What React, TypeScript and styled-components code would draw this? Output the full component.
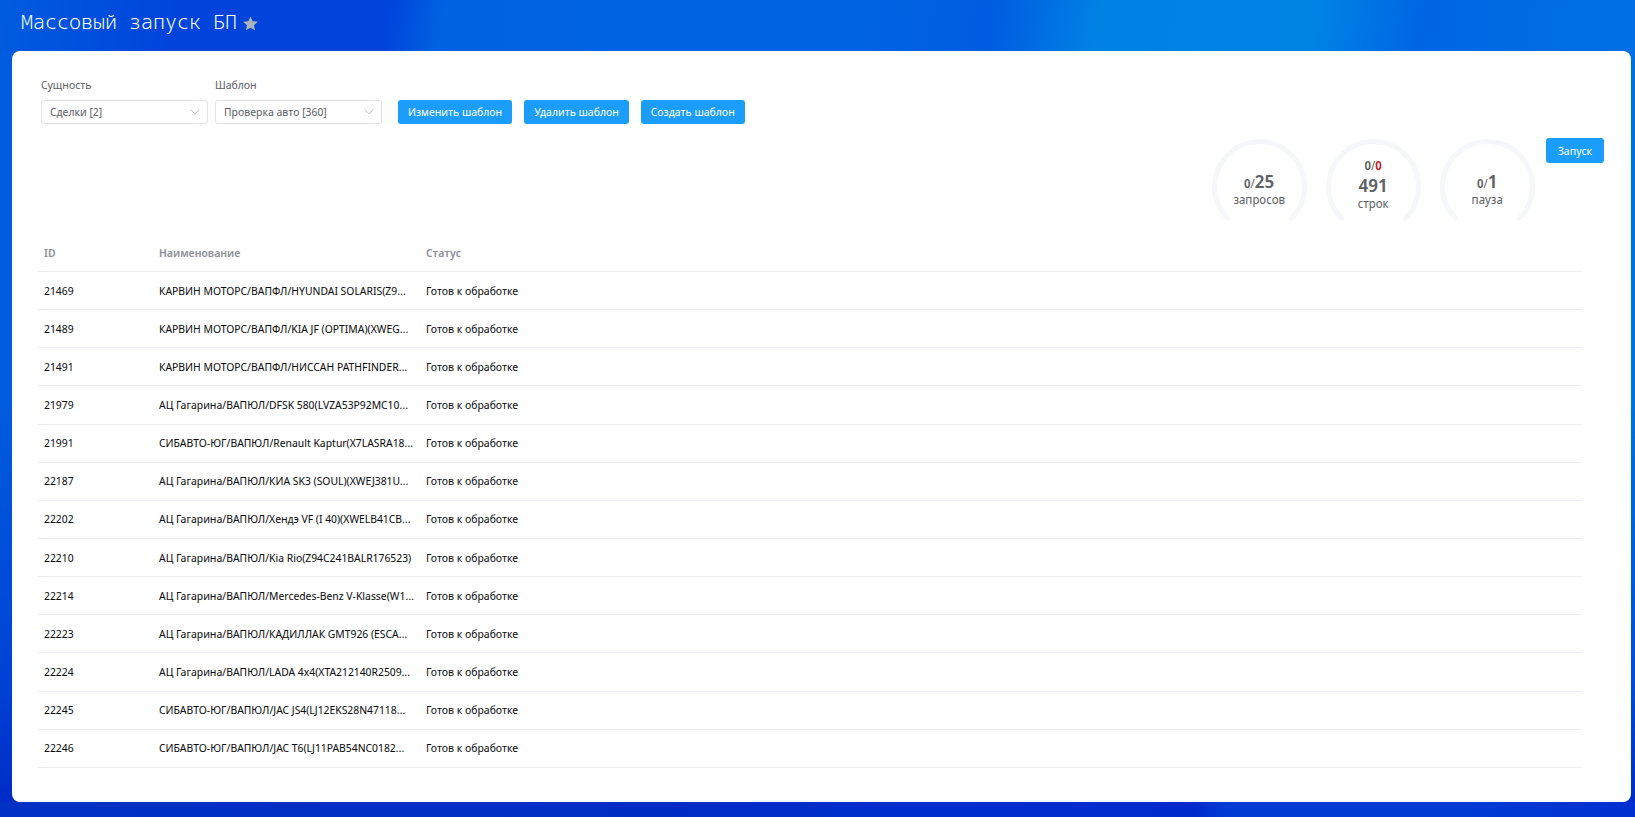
import React from 'react';
import styled, { createGlobalStyle } from 'styled-components';

const Global = createGlobalStyle`
  * { box-sizing: border-box; }
  body {
    margin: 0;
    font-family: "Noto Sans Display", "Noto Sans", sans-serif;
    font-size: 11px;
    color: #0d0e10;
    background: #0050dc;
  }
`;

const Page = styled.div`
  min-height: 100vh;
  display: flex;
  flex-direction: column;
  padding: 0 4px 15px 12px;
  background:
    linear-gradient(to right, #0030c4 0, #002cc4 40%, #002ece 55%, #002acc 73%, #003ad4 75%, #003ad4 90%, #0030d0 100%) bottom / 100% 15px no-repeat,
    linear-gradient(to bottom, transparent 400px, rgba(0, 40, 205, 0.5) 680px, #002cc8 800px),
    linear-gradient(to right, #005cde 12px, transparent 12px) 0 51px no-repeat,
    linear-gradient(100deg, #005cde 0, #0044dc 10%, #0044dc 22%, #0062e0 25%, #0064e2 48%, #005ce0 56%, #0082e4 62%, #0084e4 74%, #0066e4 80%, #0074e6 100%);
`;

const Header = styled.header`
  display: flex;
  align-items: center;
  gap: 6px;
  height: 51px;
  padding: 0 8px 8px 9px;
`;

const Title = styled.h1`
  margin: 0;
  color: #fff;
  font: 300 20px/24px "Noto Sans Mono", "Liberation Mono", monospace;
`;

const StarButton = styled.button`
  display: flex;
  padding: 4px 0 0;
  border: 0;
  background: none;
  color: #a9b4bf;
`;

const Panel = styled.main`
  flex: 1;
  display: flex;
  flex-direction: column;
  padding: 26px 27px 34px 26px;
  border-radius: 8px;
  background: #fff;
`;

const Toolbar = styled.div`
  display: flex;
  align-items: flex-end;
  gap: 12px;
  padding-left: 3px;
`;

const Fields = styled.div`
  display: flex;
  gap: 7px;
  margin-right: 4px;
`;

const Field = styled.label`
  display: flex;
  flex-direction: column;
  gap: 7px;
  width: 167px;
  line-height: 16px;
  color: #606266;
`;

const SelectBox = styled.span`
  display: grid;
  align-items: center;
  > * { grid-area: 1 / 1; }
  > svg { justify-self: end; margin-right: 8px; pointer-events: none; }
`;

const Select = styled.select`
  appearance: none;
  width: 100%;
  height: 24px;
  padding: 0 24px 0 8px;
  border: 1px solid #e0e2e8;
  border-radius: 3px;
  background: #fff;
  font: inherit;
  color: #606266;
`;

const Button = styled.button<{ $large?: boolean }>`
  height: ${(p) => (p.$large ? 25 : 24)}px;
  padding: 0 ${(p) => (p.$large ? 12 : 10)}px 1px;
  border: 0;
  border-radius: 3px;
  background: #1b9dfd;
  color: #fff;
  font: inherit;
  white-space: nowrap;
`;

const Stats = styled.section`
  display: flex;
  justify-content: flex-end;
  align-items: flex-start;
  gap: 19px;
  margin-top: 14px;
  button { margin-left: -8px; }
`;

const GaugeBox = styled.div`
  display: grid;
  place-items: center;
  width: 95px;
  height: 97px;
  > * { grid-area: 1 / 1; }
`;

const GaugeText = styled.div<{ $lines: number }>`
  display: flex;
  flex-direction: column;
  align-items: center;
  padding: ${(p) => (p.$lines === 2 ? '8px 0 0' : '0 0 4px')};
  color: #606266;
  font-size: 12px;
  line-height: 16px;
`;

const Count = styled.div`
  font-weight: 600;
  line-height: 16px;
`;

const Total = styled.strong`
  font-size: 18px;
  font-weight: 600;
  line-height: 16px;

  ${GaugeText} > & { line-height: 22px; }
`;

const Slash = styled.span`
  font-weight: 400;
`;

const Failed = styled.strong`
  font-weight: 600;
  color: #c9151e;
`;

const TableArea = styled.div`
  flex: 1;
  display: grid;
  padding-right: 22px;
`;

const Table = styled.table`
  width: 100%;
  height: 100%;
  table-layout: fixed;
  border-collapse: separate;
  border-spacing: 0;
`;

const Cell = styled.td`
  height: 38px;
  padding: 0 0 1px 6px;
  border-bottom: 1px solid #ebeef5;
  overflow: hidden;
  text-overflow: ellipsis;
  white-space: nowrap;
`;

const HeadCell = styled.th<{ $width?: number }>`
  width: ${(p) => (p.$width ? `${p.$width}px` : 'auto')};
  height: 37px;
  padding: 0 6px 2px;
  border-bottom: 1px solid #ebeef5;
  text-align: left;
  font-weight: 600;
  color: #909399;
`;

const rows: [string, string][] = [
  ['21469', 'КАРВИН МОТОРС/ВАПФЛ/HYUNDAI SOLARIS(Z9…'],
  ['21489', 'КАРВИН МОТОРС/ВАПФЛ/KIA JF (OPTIMA)(XWEG…'],
  ['21491', 'КАРВИН МОТОРС/ВАПФЛ/НИССАН PATHFINDER…'],
  ['21979', 'АЦ Гагарина/ВАПЮЛ/DFSK 580(LVZA53P92MC10…'],
  ['21991', 'СИБАВТО-ЮГ/ВАПЮЛ/Renault Kaptur(X7LASRA18…'],
  ['22187', 'АЦ Гагарина/ВАПЮЛ/КИА SK3 (SOUL)(XWEJ381U…'],
  ['22202', 'АЦ Гагарина/ВАПЮЛ/Хендэ VF (I 40)(XWELB41CB…'],
  ['22210', 'АЦ Гагарина/ВАПЮЛ/Kia Rio(Z94C241BALR176523)'],
  ['22214', 'АЦ Гагарина/ВАПЮЛ/Mercedes-Benz V-Klasse(W1…'],
  ['22223', 'АЦ Гагарина/ВАПЮЛ/КАДИЛЛАК GMT926 (ESCA…'],
  ['22224', 'АЦ Гагарина/ВАПЮЛ/LADA 4x4(XTA212140R2509…'],
  ['22245', 'СИБАВТО-ЮГ/ВАПЮЛ/JAC JS4(LJ12EKS28N47118…'],
  ['22246', 'СИБАВТО-ЮГ/ВАПЮЛ/JAC T6(LJ11PAB54NC0182…'],
];

function SelectField({ label, value }: { label: string; value: string }) {
  return (
    <Field>
      {label}
      <SelectBox>
        <Select defaultValue={value}>
          <option>{value}</option>
        </Select>
        <svg width="10" height="6" viewBox="0 0 10 6" fill="none" stroke="#b4b8c0">
          <path d="M1 .8 5 4.8 9 .8" />
        </svg>
      </SelectBox>
    </Field>
  );
}

function Gauge({ lines, children }: { lines: number; children: React.ReactNode }) {
  return (
    <GaugeBox>
      <svg width="95" height="95" viewBox="0 0 95 95" fill="none" stroke="#f5f7fa" strokeWidth="5" strokeLinecap="round">
        <path d="M15.7 79.3A45 45 0 1 1 79.3 79.3" />
      </svg>
      <GaugeText $lines={lines}>{children}</GaugeText>
    </GaugeBox>
  );
}

export default function App() {
  return (
    <Page>
      <Global />
      <Header>
        <Title>Массовый запуск БП</Title>
        <StarButton aria-label="Избранное">
          <svg width="15" height="15" viewBox="0 0 15 15" fill="currentColor">
            <path d="M7.5.5 9.7 5.2 14.8 5.8 11 9.2 12.1 14.3 7.5 11.7 2.9 14.3 4 9.2.2 5.8 5.3 5.2Z" />
          </svg>
        </StarButton>
      </Header>
      <Panel>
        <Toolbar>
          <Fields>
            <SelectField label="Сущность" value="Сделки [2]" />
            <SelectField label="Шаблон" value="Проверка авто [360]" />
          </Fields>
          <Button>Изменить шаблон</Button>
          <Button>Удалить шаблон</Button>
          <Button>Создать шаблон</Button>
        </Toolbar>
        <Stats>
          <Gauge lines={2}>
            <Count>0<Slash>/</Slash><Total>25</Total></Count>
            запросов
          </Gauge>
          <Gauge lines={3}>
            <Count>0<Slash>/</Slash><Failed>0</Failed></Count>
            <Total>491</Total>
            строк
          </Gauge>
          <Gauge lines={2}>
            <Count>0<Slash>/</Slash><Total>1</Total></Count>
            пауза
          </Gauge>
          <Button $large>Запуск</Button>
        </Stats>
        <TableArea>
          <Table>
            <thead>
              <tr>
                <HeadCell $width={115}>ID</HeadCell>
                <HeadCell $width={267}>Наименование</HeadCell>
                <HeadCell>Статус</HeadCell>
              </tr>
            </thead>
            <tbody>
              {rows.map(([id, name]) => (
                <tr key={id}>
                  <Cell>{id}</Cell>
                  <Cell>{name}</Cell>
                  <Cell>Готов к обработке</Cell>
                </tr>
              ))}
            </tbody>
          </Table>
        </TableArea>
      </Panel>
    </Page>
  );
}
